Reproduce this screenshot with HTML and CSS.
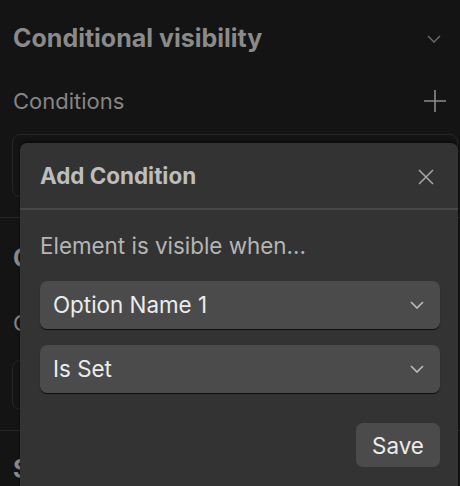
FILE: index.html
```html
<!DOCTYPE html>
<html>
<head>
<meta charset="utf-8">
<link rel="stylesheet" href="styles.css">
</head>
<body>
<div class="panel">
  <div class="section-head">
    <span class="section-title">Conditional visibility</span>
    <svg class="head-chevron" width="14" height="8" viewBox="0 0 14 8"><path d="M1 1l6 6 6-6" fill="none" stroke="#6e6e6e" stroke-width="1.4"/></svg>
  </div>
  <div class="row">
    <span class="row-label">Conditions</span>
    <svg class="plus" width="22" height="22" viewBox="0 0 22 22"><path d="M11 0v22M0 11h22" stroke="#8a8a8a" stroke-width="1.6"/></svg>
  </div>
  <div class="box"></div>
  <div class="divider"></div>
  <div class="section-head second">
    <span class="section-title">Custom attributes</span>
  </div>
  <div class="row">
    <span class="row-label">Component</span>
  </div>
  <div class="box short"></div>
  <div class="divider"></div>
  <div class="section-head third">
    <span class="section-title">Settings</span>
  </div>
</div>

<div class="modal">
  <div class="modal-head">
    <span class="modal-title">Add Condition</span>
    <svg class="close" width="16" height="16" viewBox="0 0 16 16"><path d="M1 1l14 14M15 1L1 15" stroke="#a8a8a8" stroke-width="1.5"/></svg>
  </div>
  <div class="modal-body">
    <div class="label">Element is visible when...</div>
    <div class="select">
      <span>Option Name 1</span>
      <svg width="14" height="8" viewBox="0 0 14 8"><path d="M1 1l6 6 6-6" fill="none" stroke="#bdbdbd" stroke-width="1.6"/></svg>
    </div>
    <div class="select">
      <span>Is Set</span>
      <svg width="14" height="8" viewBox="0 0 14 8"><path d="M1 1l6 6 6-6" fill="none" stroke="#bdbdbd" stroke-width="1.6"/></svg>
    </div>
    <div class="actions">
      <button class="save">Save</button>
    </div>
  </div>
</div>
</body>
</html>
```

FILE: styles.css
```css
html, body {
  margin: 0;
  padding: 0;
  background: #141414;
  width: 460px;
  height: 486px;
  overflow: hidden;
  font-family: Inter, "Noto Sans", sans-serif;
}

.panel {
  display: flex;
  flex-direction: column;
}

.section-head {
  height: 76px;
  display: flex;
  align-items: center;
  justify-content: space-between;
  padding: 0 19px 0 13px;
}

.section-head.second {
  height: 80px;
}

.section-head.third {
  height: 76px;
}

.section-title {
  font-size: 25px;
  line-height: 30px;
  font-weight: 700;
  color: #8a8a8a;
}

.head-chevron {
  margin-top: 2px;
}

.row {
  height: 50px;
  display: flex;
  align-items: center;
  justify-content: space-between;
  padding: 0 14px 0 13px;
}

.row-label {
  font-size: 22px;
  line-height: 26px;
  color: #858585;
}

.box {
  margin: 8px 2px 0 12px;
  height: 61px;
  border: 1px solid #262626;
  border-radius: 8px;
}

.box.short {
  height: 48px;
  margin-top: 12px;
}

.divider {
  margin-top: 20px;
  height: 1px;
  background: #262626;
}

.modal {
  position: absolute;
  left: 20px;
  top: 143px;
  width: 438px;
  height: 360px;
  background: #333333;
  border-radius: 7px 7px 0 0;
  box-shadow: 0 -2px 3px rgba(0, 0, 0, 0.5);
}

.modal-head {
  height: 65px;
  display: flex;
  align-items: center;
  justify-content: space-between;
  padding: 0 24px 0 20px;
  border-bottom: 2px solid #474747;
}

.modal-title {
  font-size: 22.4px;
  line-height: 26px;
  font-weight: 700;
  color: #bdbdbd;
  margin-top: 0;
}

.close {
  margin-top: 2px;
}

.modal-body {
  padding: 23px 18px 0 20px;
  display: flex;
  flex-direction: column;
}

.label {
  font-size: 22.4px;
  line-height: 26px;
  color: #b5b5b5;
  margin-bottom: 22px;
}

.select {
  height: 48px;
  background: #4b4b4b;
  border-radius: 7px;
  box-shadow: 0 1px 1px rgba(0, 0, 0, 0.7);
  display: flex;
  align-items: center;
  justify-content: space-between;
  padding: 0 16px 0 13px;
  margin-bottom: 16px;
  font-size: 22.4px;
  color: #ececec;
}

.select span {
  margin-top: -2px;
}

.actions {
  display: flex;
  justify-content: flex-end;
  margin-top: 14px;
}

.save {
  width: 84px;
  height: 44px;
  border: none;
  border-radius: 7px;
  background: #4b4b4b;
  color: #ececec;
  font-family: Inter, "Noto Sans", sans-serif;
  font-size: 22.4px;
  padding: 0;
}
```
